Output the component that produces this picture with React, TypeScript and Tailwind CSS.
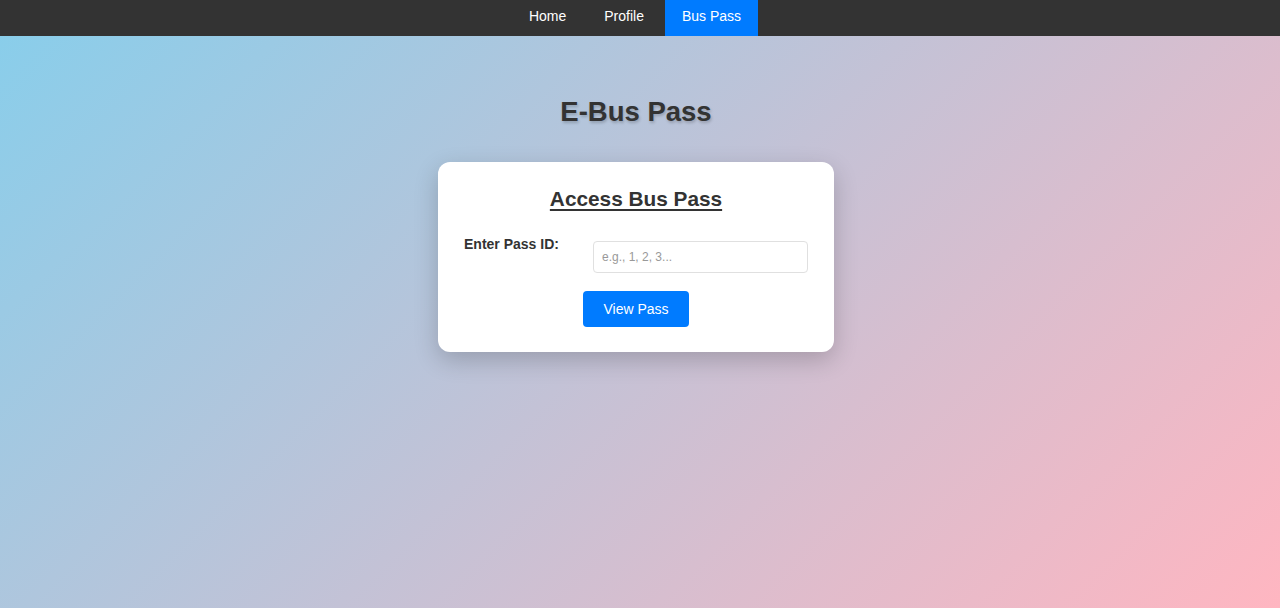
import React from 'react';

const NavLink = ({ label, active }: { label: string; active?: boolean }) => (
  <a
    href="#"
    className={
      active
        ? 'h-9 flex items-center pb-[4px] px-[17px] bg-[#007bff] text-white'
        : 'h-9 flex items-center pb-[4px] px-[17px] text-white'
    }
  >
    {label}
  </a>
);

export default function App() {
  return (
    <div className="min-h-[608px] flex flex-col bg-[linear-gradient(135deg,#87ceeb,#ffb6c1)] font-['Liberation_Sans',Arial,sans-serif] text-[#333]">
      {/* Top navigation */}
      <nav className="h-9 bg-[#333] flex justify-center gap-1 text-[14px] pr-[10px]">
        <NavLink label="Home" />
        <NavLink label="Profile" />
        <NavLink label="Bus Pass" active />
      </nav>

      <main className="flex flex-col items-center pr-2">
        <h1 className="mt-[60px] text-[27.5px] leading-[32px] font-bold text-[#333] [text-shadow:1px_2px_3px_rgba(0,0,0,0.2)]">
          E-Bus Pass
        </h1>

        <div className="mt-[34px] w-[396px] bg-white rounded-xl shadow-[0_8px_24px_rgba(0,0,0,0.2)] px-[26px] pt-[25px] pb-[25px] flex flex-col items-center">
          <h2 className="text-[20.8px] leading-[24px] font-bold underline underline-offset-[3px] text-[#333]">
            Access Bus Pass
          </h2>

          <div className="mt-[25px] w-full flex items-start">
            <label className="w-[129px] shrink-0 text-[14px] leading-[16px] font-bold text-[#333]">
              Enter Pass ID:
            </label>
            <input
              type="text"
              placeholder="e.g., 1, 2, 3..."
              className="mt-[5px] flex-1 h-[32px] px-2 text-[12px] border border-[#e0e0e0] rounded-[4px] outline-none placeholder:text-[#999]"
            />
          </div>

          <button className="mt-[18px] w-[106px] h-9 bg-[#007bff] text-white text-[14px] rounded-[4px]">
            View Pass
          </button>
        </div>
      </main>
    </div>
  );
}
